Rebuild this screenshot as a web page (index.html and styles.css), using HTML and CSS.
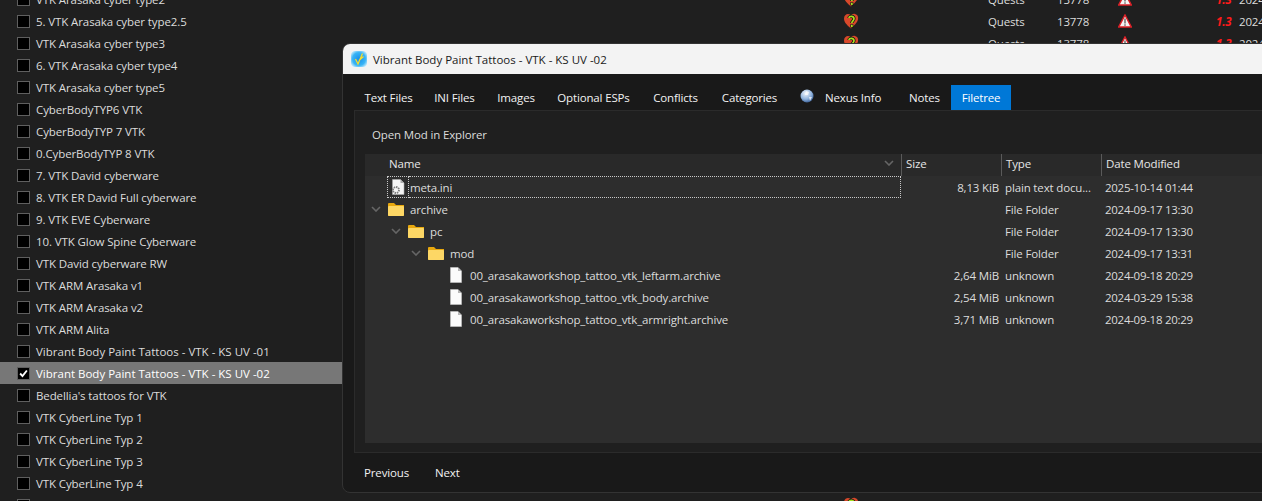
FILE: index.html
```html
<!DOCTYPE html>
<html lang="en">
<head>
    <meta charset="UTF-8">
    <title>Mod list</title>
    <link rel="stylesheet" href="styles.css">
</head>
<body>
    <svg class="defs" width="0" height="0">
        <symbol id="ico-heart" viewBox="0 0 16 18">
            <path d="M8 16.500 C3 12.500 1 9.500 1 6.500 C1 3.500 3 2 5 2 C6.500 2 7.500 2.800 8 3.500 C8.800 2.500 10 1.500 12 2 C14.500 2.500 15.500 4.500 15 7.500 C14.500 10.500 11 13.500 8 16.500Z" fill="#d8482a"/>
            <path d="M6 6 C6 3.800 11 3.800 11 6.800 C11 8.800 8.800 8.800 8.800 11" fill="none" stroke="#111" stroke-width="3.200"/>
            <path d="M6 6 C6 3.800 11 3.800 11 6.800 C11 8.800 8.800 8.800 8.800 11" fill="none" stroke="#a6e01e" stroke-width="1.700"/>
            <rect x="7.300" y="12.300" width="3" height="3.200" fill="#111"/>
            <rect x="7.900" y="12.800" width="1.800" height="2.200" fill="#a6e01e"/>
        </symbol>
        <symbol id="ico-warn" viewBox="0 0 14 14">
            <path d="M7 1 L13.300 13 H0.700Z" fill="#f4f4f4" stroke="#dc2027" stroke-width="1.500"/>
            <rect x="6.200" y="4.500" width="1.600" height="5" fill="#777"/>
            <rect x="6.200" y="10.300" width="1.600" height="1.500" fill="#777"/>
        </symbol>
        <symbol id="ico-folder" viewBox="0 0 16 14">
            <path d="M0 2 Q0 1 1 1 H6 L8 3 H16 V13 Q16 14 15 14 H1 Q0 14 0 13Z" fill="#e8a80e"/>
            <path d="M0 5 Q0 4 1 4 H15 Q16 4 16 5 V13 Q16 14 15 14 H1 Q0 14 0 13Z" fill="#fdd765"/>
        </symbol>
        <symbol id="ico-file" viewBox="0 0 12 16">
            <path d="M0.500 0.500 H8 L11.500 4 V15.500 H0.500Z" fill="#fbfbfb" stroke="#c8c8c8" stroke-width="0.600"/>
            <path d="M8 0.500 V4 H11.500Z" fill="#b5b5b5"/>
        </symbol>
        <symbol id="ico-chevron" viewBox="0 0 10 6">
            <path d="M1 1 L5 5 L9 1" fill="none" stroke="#666" stroke-width="1.600"/>
        </symbol>
    </svg>

    <div class="modlist">
        <div class="mod"><span class="check"></span><span class="mod-name">VTK Arasaka cyber type2</span>
            <svg class="heart"><use href="#ico-heart"/></svg><span class="cat">Quests</span><span class="nexus">13778</span><svg class="warn"><use href="#ico-warn"/></svg><span class="ver">1.3</span><span class="date">2024</span></div>
        <div class="mod"><span class="check"></span><span class="mod-name">5. VTK Arasaka cyber type2.5</span>
            <svg class="heart"><use href="#ico-heart"/></svg><span class="cat">Quests</span><span class="nexus">13778</span><svg class="warn"><use href="#ico-warn"/></svg><span class="ver">1.3</span><span class="date">2024</span></div>
        <div class="mod"><span class="check"></span><span class="mod-name">VTK Arasaka cyber type3</span>
            <svg class="heart"><use href="#ico-heart"/></svg><span class="cat">Quests</span><span class="nexus">13778</span><svg class="warn"><use href="#ico-warn"/></svg><span class="ver">1.3</span><span class="date">2024</span></div>
        <div class="mod"><span class="check"></span><span class="mod-name">6. VTK Arasaka cyber type4</span></div>
        <div class="mod"><span class="check"></span><span class="mod-name">VTK Arasaka cyber type5</span></div>
        <div class="mod"><span class="check"></span><span class="mod-name">CyberBodyTYP6 VTK</span></div>
        <div class="mod"><span class="check"></span><span class="mod-name">CyberBodyTYP 7 VTK</span></div>
        <div class="mod"><span class="check"></span><span class="mod-name">0.CyberBodyTYP 8 VTK</span></div>
        <div class="mod"><span class="check"></span><span class="mod-name">7. VTK David cyberware</span></div>
        <div class="mod"><span class="check"></span><span class="mod-name">8. VTK ER David Full cyberware</span></div>
        <div class="mod"><span class="check"></span><span class="mod-name">9. VTK EVE Cyberware</span></div>
        <div class="mod"><span class="check"></span><span class="mod-name">10. VTK Glow Spine Cyberware</span></div>
        <div class="mod"><span class="check"></span><span class="mod-name">VTK David cyberware RW</span></div>
        <div class="mod"><span class="check"></span><span class="mod-name">VTK ARM Arasaka v1</span></div>
        <div class="mod"><span class="check"></span><span class="mod-name">VTK ARM Arasaka v2</span></div>
        <div class="mod"><span class="check"></span><span class="mod-name">VTK ARM Alita</span></div>
        <div class="mod"><span class="check"></span><span class="mod-name long">Vibrant Body Paint Tattoos - VTK - KS UV -01</span></div>
        <div class="mod selected"><span class="check checked"><svg viewBox="0 0 13 13"><path d="M2.500 6.500 L5.300 9.500 L10.500 3" fill="none" stroke="#fff" stroke-width="2.200"/></svg></span><span class="mod-name long">Vibrant Body Paint Tattoos - VTK - KS UV -02</span></div>
        <div class="mod"><span class="check"></span><span class="mod-name">Bedellia's tattoos for VTK</span></div>
        <div class="mod"><span class="check"></span><span class="mod-name">VTK CyberLine Typ 1</span></div>
        <div class="mod"><span class="check"></span><span class="mod-name">VTK CyberLine Typ 2</span></div>
        <div class="mod"><span class="check"></span><span class="mod-name">VTK CyberLine Typ 3</span></div>
        <div class="mod"><span class="check"></span><span class="mod-name">VTK CyberLine Typ 4</span></div>
        <div class="mod"><span class="check"></span><span class="mod-name"></span>
            <svg class="heart"><use href="#ico-heart"/></svg></div>
    </div>

    <div class="window">
        <div class="titlebar">
            <svg class="app-icon" viewBox="0 0 16 16">
                <defs>
                    <radialGradient id="app-glow" cx="50%" cy="50%" r="62%">
                        <stop offset="0%" stop-color="#1a8fe8"/>
                        <stop offset="65%" stop-color="#38b4f6"/>
                        <stop offset="100%" stop-color="#d4effc"/>
                    </radialGradient>
                </defs>
                <rect width="16" height="16" rx="4" fill="url(#app-glow)"/>
                <path d="M4.500 8 L7 13 L11.500 2.500 M8 9.500 L12.500 5.500" fill="none" stroke="#f5dc2a" stroke-width="1.300"/>
            </svg>
            <span>Vibrant Body Paint Tattoos - VTK - KS UV -02</span>
        </div>

        <div class="window-body">
            <div class="tabs">
                <div class="tab tab-text">Text Files</div>
                <div class="tab tab-ini">INI Files</div>
                <div class="tab tab-images">Images</div>
                <div class="tab tab-esp">Optional ESPs</div>
                <div class="tab tab-conflicts">Conflicts</div>
                <div class="tab tab-categories">Categories</div>
                <div class="tab tab-nexus">
                    <svg class="globe" viewBox="0 0 14 14">
                        <defs>
                            <radialGradient id="globe-fill" cx="40%" cy="30%" r="75%">
                                <stop offset="0%" stop-color="#f2f6fb"/>
                                <stop offset="60%" stop-color="#8fb2dd"/>
                                <stop offset="100%" stop-color="#2f568e"/>
                            </radialGradient>
                        </defs>
                        <circle cx="7" cy="7" r="6.500" fill="url(#globe-fill)"/>
                        <path d="M6 2 L9 3 L8 6 L5 6Z M9 8 L12 8 L10 12Z" fill="#fff" opacity="0.700"/>
                    </svg>
                    Nexus Info
                </div>
                <div class="tab tab-notes">Notes</div>
                <div class="tab tab-filetree active">Filetree</div>
            </div>

            <div class="pane">
                <div class="pane-link">Open Mod in Explorer</div>

                <div class="tree">
                    <div class="tree-head">
                        <div class="head-name">Name<svg class="sort"><use href="#ico-chevron"/></svg></div>
                        <div class="head-col">Size</div>
                        <div class="head-col">Type</div>
                        <div class="head-col">Date Modified</div>
                    </div>

                    <div class="tree-row focused">
                        <div class="cell-name">
                            <span class="focus-icon">
                                <svg class="file-ico" viewBox="0 0 14 16">
                                    <path d="M1.500 0.500 H9.500 L13 4 V15.500 H1.500Z" fill="#f4f4f4" stroke="#aaa" stroke-width="0.600"/>
                                    <path d="M9.500 0.500 V4 H13Z" fill="#aaa"/>
                                    <circle cx="5" cy="11" r="3" fill="none" stroke="#7c7c7c" stroke-width="1.800" stroke-dasharray="1.500 0.800"/>
                                </svg>
                            </span>
                            <span class="focus-name">meta.ini</span>
                        </div>
                        <div class="cell-size">8,13 KiB</div>
                        <div class="cell-type">plain text docu...</div>
                        <div class="cell-date">2025-10-14 01:44</div>
                    </div>

                    <div class="tree-row">
                        <div class="cell-name level-1"><svg class="arrow"><use href="#ico-chevron"/></svg><svg class="folder"><use href="#ico-folder"/></svg>archive</div>
                        <div class="cell-size"></div>
                        <div class="cell-type">File Folder</div>
                        <div class="cell-date">2024-09-17 13:30</div>
                    </div>
                    <div class="tree-row">
                        <div class="cell-name level-2"><svg class="arrow"><use href="#ico-chevron"/></svg><svg class="folder"><use href="#ico-folder"/></svg>pc</div>
                        <div class="cell-size"></div>
                        <div class="cell-type">File Folder</div>
                        <div class="cell-date">2024-09-17 13:30</div>
                    </div>
                    <div class="tree-row">
                        <div class="cell-name level-3"><svg class="arrow"><use href="#ico-chevron"/></svg><svg class="folder"><use href="#ico-folder"/></svg>mod</div>
                        <div class="cell-size"></div>
                        <div class="cell-type">File Folder</div>
                        <div class="cell-date">2024-09-17 13:31</div>
                    </div>
                    <div class="tree-row">
                        <div class="cell-name level-4"><svg class="file"><use href="#ico-file"/></svg>00_arasakaworkshop_tattoo_vtk_leftarm.archive</div>
                        <div class="cell-size">2,64 MiB</div>
                        <div class="cell-type">unknown</div>
                        <div class="cell-date">2024-09-18 20:29</div>
                    </div>
                    <div class="tree-row">
                        <div class="cell-name level-4"><svg class="file"><use href="#ico-file"/></svg>00_arasakaworkshop_tattoo_vtk_body.archive</div>
                        <div class="cell-size">2,54 MiB</div>
                        <div class="cell-type">unknown</div>
                        <div class="cell-date">2024-03-29 15:38</div>
                    </div>
                    <div class="tree-row">
                        <div class="cell-name level-4"><svg class="file"><use href="#ico-file"/></svg>00_arasakaworkshop_tattoo_vtk_armright.archive</div>
                        <div class="cell-size">3,71 MiB</div>
                        <div class="cell-type">unknown</div>
                        <div class="cell-date">2024-09-18 20:29</div>
                    </div>
                </div>
            </div>

            <div class="footer">
                <div class="nav-btn nav-prev">Previous</div>
                <div class="nav-btn">Next</div>
            </div>
        </div>
    </div>
</body>
</html>
```

FILE: styles.css
```css
html, body {
    height: 100%;
}

body {
    margin: 0;
    overflow: hidden;
    background-color: #1f1f1f;
    color: #dcdcdc;
    font-family: 'Open Sans', 'Noto Sans', sans-serif;
    font-size: 11.5px;
    letter-spacing: -0.15px;
}

.defs {
    display: block;
    height: 0;
}

/* mod list behind the dialog */
.modlist {
    margin-top: -12px;
}

.mod {
    display: flex;
    align-items: center;
    height: 22px;
    padding-left: 17px;
}

.mod.selected {
    background-color: #777777;
    color: #ffffff;
}

.check {
    flex: none;
    box-sizing: border-box;
    width: 13px;
    height: 13px;
    border: 1px solid #5f5f5f;
    background-color: #000000;
}

.check svg {
    display: block;
    width: 11px;
    height: 11px;
}

.mod-name {
    flex: none;
    width: 814px;
    margin-left: 6px;
    letter-spacing: -0.1px;
}

.mod-name.long {
    letter-spacing: 0;
}

.heart {
    flex: none;
    width: 16px;
    height: 18px;
    margin-left: -7px;
}

.cat {
    flex: none;
    width: 69px;
    margin-left: 129px;
}

.nexus {
    flex: none;
    width: 61px;
}

.warn {
    flex: none;
    width: 14px;
    height: 14px;
}

.ver {
    flex: none;
    width: 23px;
    margin-left: 84px;
    color: #ff1a1a;
    font-style: italic;
    font-weight: bold;
}

.date {
    flex: none;
}

/* dialog */
.window {
    position: absolute;
    left: 342px;
    top: 43px;
    box-sizing: border-box;
    display: flex;
    flex-direction: column;
    width: 1000px;
    height: 450px;
    border: 1px solid #333333;
    border-radius: 8px;
    overflow: hidden;
    background-color: #191919;
}

.titlebar {
    flex: none;
    display: flex;
    align-items: center;
    height: 30px;
    padding-left: 8px;
    background-color: #f3f3f3;
    color: #1a1a1a;
    letter-spacing: 0;
}

.app-icon {
    width: 16px;
    height: 16px;
    margin-right: 6px;
}

.window-body {
    flex: 1;
    display: flex;
    flex-direction: column;
    padding-left: 11px;
}

.tabs {
    flex: none;
    display: flex;
    height: 25px;
    margin-top: 11px;
}

.tab {
    display: flex;
    align-items: center;
    justify-content: center;
    color: #f2f2f2;
}

.tab-text { width: 69px; }
.tab-ini { width: 63px; }
.tab-images { width: 60px; }
.tab-esp { width: 95px; }
.tab-conflicts { width: 69px; }
.tab-categories { width: 79px; }
.tab-nexus { width: 109px; justify-content: flex-start; padding-left: 11px; box-sizing: border-box; }
.tab-notes { width: 53px; }
.tab-filetree { width: 60px; }

.tab.active {
    background-color: #0078d7;
    color: #ffffff;
}

.globe {
    width: 14px;
    height: 14px;
    margin-right: 11px;
    margin-top: -4px;
}

.pane {
    flex: none;
    box-sizing: border-box;
    display: flex;
    flex-direction: column;
    height: 343px;
    padding: 0 0 9px 10px;
    border: 1px solid #2b2b2b;
    border-right: none;
    background-color: #1f1f1f;
}

.pane-link {
    flex: none;
    height: 43px;
    padding-left: 7px;
    line-height: 48px;
}

.tree {
    flex: 1;
    background-color: #2d2d2d;
}

.tree-head,
.tree-row {
    display: grid;
    grid-template-columns: 536px 100px 100px 1fr;
    height: 22px;
    align-items: center;
}

.tree-head {
    background-color: #292929;
}

.head-name {
    display: flex;
    align-items: center;
    justify-content: space-between;
    height: 18px;
    margin-bottom: 4px;
    padding: 0 7px 0 24px;
    box-sizing: border-box;
    color: #e6e6e6;
}

.head-col {
    height: 22px;
    line-height: 19px;
    padding-left: 4px;
    border-left: 1px solid #5a5a5a;
    color: #e6e6e6;
}

.sort,
.arrow {
    flex: none;
    width: 10px;
    height: 6px;
}

.cell-name {
    display: flex;
    align-items: center;
    height: 22px;
    box-sizing: border-box;
}

.cell-size {
    padding-right: 2px;
    text-align: right;
}

.cell-type {
    padding-left: 4px;
    overflow: hidden;
    white-space: nowrap;
}

.cell-date {
    padding-left: 4px;
    letter-spacing: -0.28px;
}

.level-1 { padding-left: 6px; }
.level-2 { padding-left: 26px; }
.level-3 { padding-left: 46px; }
.level-4 { padding-left: 85px; }

.arrow {
    margin-right: 7px;
}

.folder {
    flex: none;
    width: 16px;
    height: 14px;
    margin-right: 6px;
}

.file {
    flex: none;
    width: 12px;
    height: 16px;
    margin-right: 8px;
}

/* the focused row gets a dotted box round icon and name */
.focus-icon {
    flex: none;
    box-sizing: border-box;
    display: flex;
    align-items: center;
    justify-content: center;
    width: 22px;
    height: 22px;
    margin-left: 22px;
    border: 1px dotted #c8c8c8;
}

.file-ico {
    width: 14px;
    height: 16px;
}

.focus-name {
    flex: 1;
    box-sizing: border-box;
    height: 22px;
    line-height: 21px;
    padding-left: 1px;
    border: 1px dotted #c8c8c8;
    border-left: none;
}

.footer {
    flex: 1;
    display: flex;
    align-items: center;
    padding-left: 10px;
    color: #f2f2f2;
}

.nav-btn {
    width: 71px;
}
```
